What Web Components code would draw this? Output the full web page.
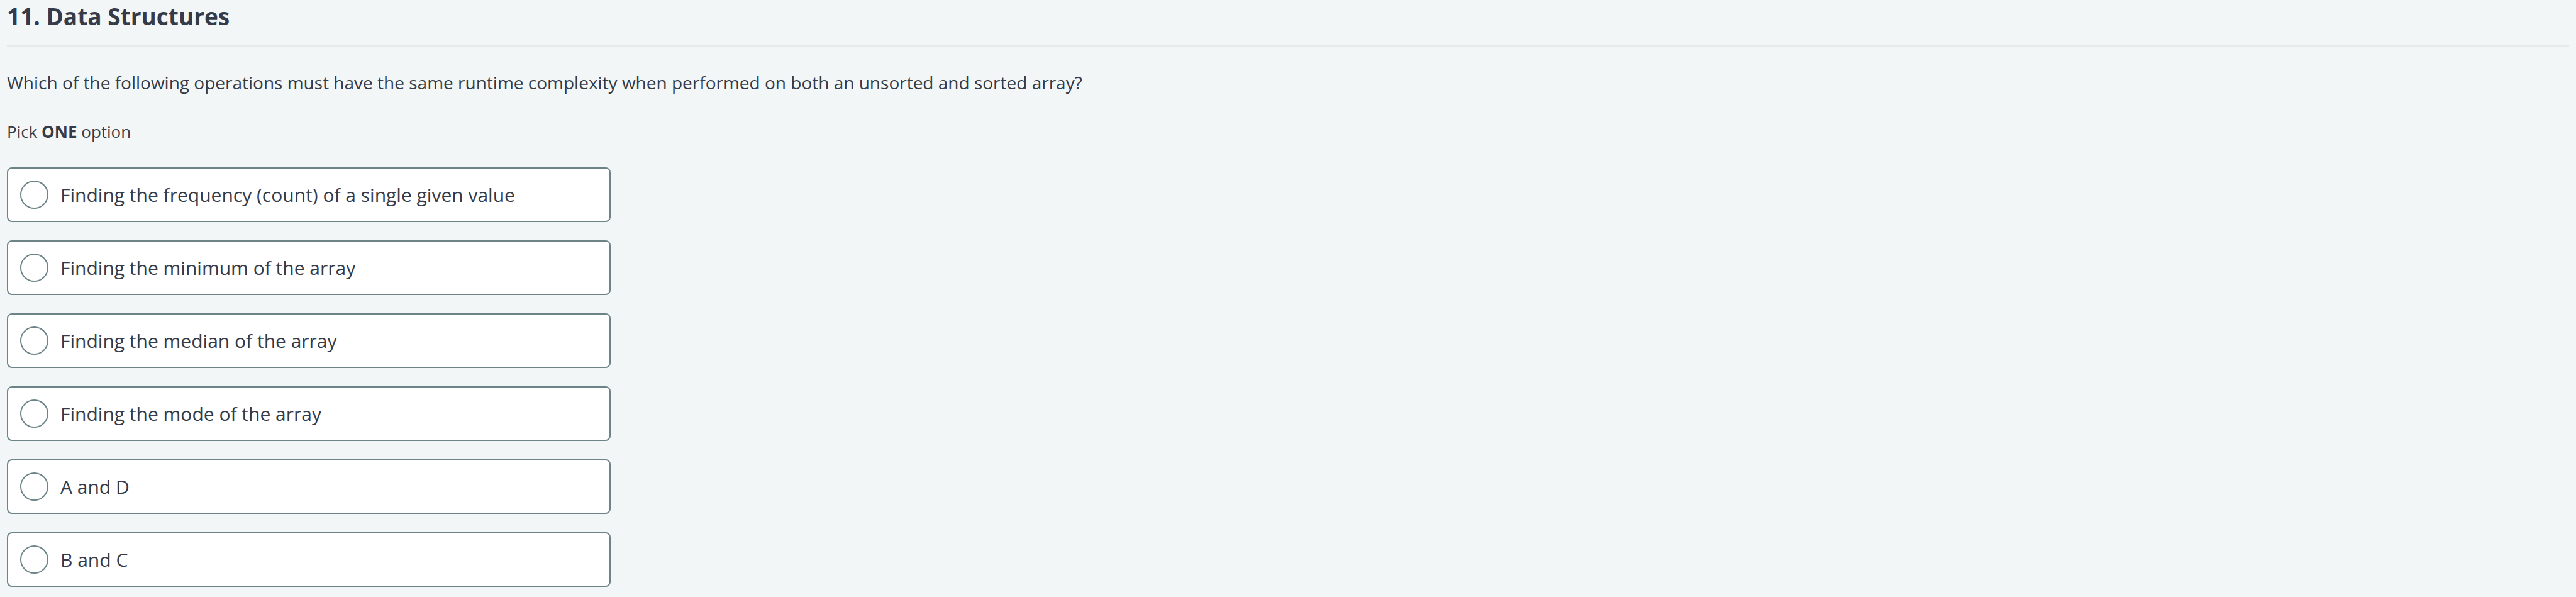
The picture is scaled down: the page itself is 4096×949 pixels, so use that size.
<!DOCTYPE html>
<html lang="en">
<head>
<meta charset="utf-8">
<meta name="viewport" content="width=device-width, initial-scale=1">
<title>11. Data Structures</title>
<style>
  body { margin: 0; background: #f2f6f7; color: #353b48; font-family: "Open Sans", "Noto Sans", sans-serif; }
</style>
</head>
<body>
<quiz-question>
  <span slot="title">11. Data Structures</span>
  <span slot="prompt">Which of the following operations must have the same runtime complexity when performed on both an unsorted and sorted array?</span>
  <quiz-options></quiz-options>
</quiz-question>

<template id="question-template">
  <style>
    :host { display: block; padding: 0 11px; }
    header { padding-bottom: 19px; border-bottom: 4px solid #e5eaeb; }
    h1 { margin: 0; font-size: 37px; line-height: 52px; font-weight: 700; }
    p { margin: 35px 0 0; font-size: 28px; line-height: 42px; }
  </style>
  <header><h1><slot name="title"></slot></h1></header>
  <p><slot name="prompt"></slot></p>
  <slot></slot>
</template>

<template id="options-template">
  <style>
    :host { display: block; margin-top: 36px; }
    fieldset { margin: 0; padding: 0; border: 0; min-width: 0; }
    legend { padding: 0; margin-bottom: 36px; font-size: 26px; line-height: 42px; }
    b { font-weight: 700; }
    .list { display: grid; gap: 29px; max-width: 960px; }
    label {
      display: flex; align-items: center; gap: 19px; box-sizing: border-box;
      min-height: 87px; padding: 18px 19px; border: 2px solid #6c8488; border-radius: 8px;
      background: #fff; font-size: 30px; line-height: 42px; cursor: pointer;
    }
    input {
      appearance: none; flex: none; box-sizing: border-box; width: 45px; height: 45px;
      margin: 0; border: 2px solid #6c8488; border-radius: 50%; background: #fff;
    }
    input:checked { background: radial-gradient(#6c8488 45%, #fff 50%); }
  </style>
  <fieldset>
    <legend>Pick <b>ONE</b> option</legend>
    <div class="list">
      <label><input type="radio" name="answer" value="a"><span>Finding the frequency (count) of a single given value</span></label>
      <label><input type="radio" name="answer" value="b"><span>Finding the minimum of the array</span></label>
      <label><input type="radio" name="answer" value="c"><span>Finding the median of the array</span></label>
      <label><input type="radio" name="answer" value="d"><span>Finding the mode of the array</span></label>
      <label><input type="radio" name="answer" value="e"><span>A and D</span></label>
      <label><input type="radio" name="answer" value="f"><span>B and C</span></label>
    </div>
  </fieldset>
</template>

<script>
  function define(name, templateId) {
    customElements.define(name, class extends HTMLElement {
      constructor() {
        super();
        this.attachShadow({ mode: "open" })
          .append(document.getElementById(templateId).content.cloneNode(true));
      }
    });
  }
  define("quiz-question", "question-template");
  define("quiz-options", "options-template");
</script>
</body>
</html>
